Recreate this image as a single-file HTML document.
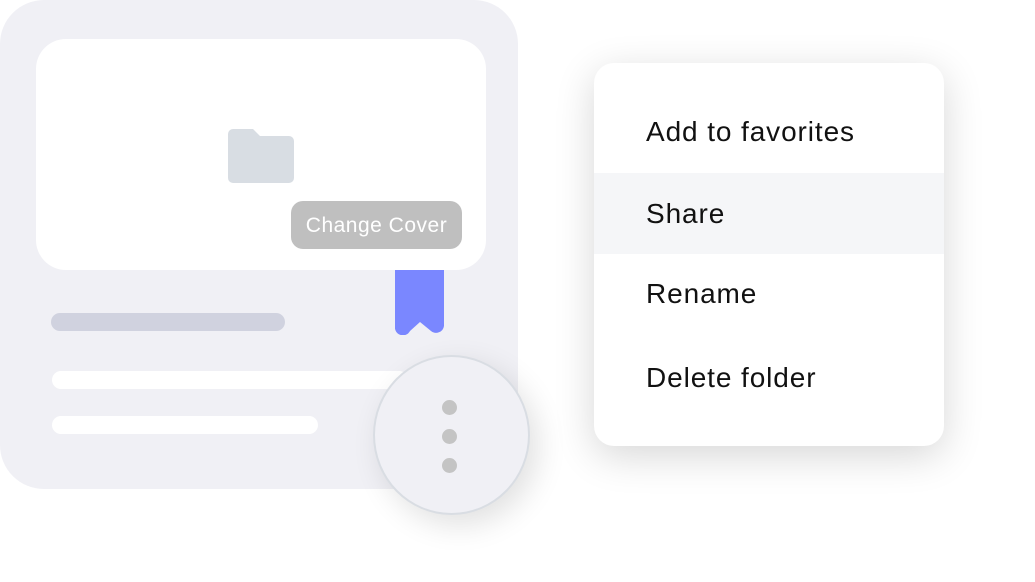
<!DOCTYPE html>
<html><head><style>
body{margin:0;width:1035px;height:582px;background:#fff;position:relative;overflow:hidden;font-family:"Liberation Sans",sans-serif}
div{position:absolute;box-sizing:border-box}
.card{left:0;top:0;width:518px;height:489px;background:#f0f0f5;border-radius:44px}
.cover{left:36px;top:39px;width:450px;height:231px;background:#fff;border-radius:30px}
.btn{left:291px;top:201px;width:171px;height:48px;background:#bfbfbf;border-radius:12px;color:#fff;font-size:21px;line-height:50px;text-align:center;letter-spacing:0.5px}
.bar{border-radius:9px;height:18px}
.circle{left:373px;top:355px;width:157px;height:160px;border-radius:50%;background:#f0f0f5;border:2.5px solid #d9dde3;box-shadow:8px 10px 30px rgba(0,0,0,0.12)}
.dot{width:15px;height:15px;border-radius:50%;background:#c4c4c4;left:442px}
.menu{left:594px;top:63px;width:350px;height:383px;background:#fff;border-radius:20px;box-shadow:0 10px 40px rgba(0,0,0,0.16);overflow:hidden}
.item{left:0;width:350px;height:81px;padding-left:52px;font-size:28px;letter-spacing:0.9px;color:#111;line-height:81px}
</style></head><body>
<div class="card"></div>
<div class="cover"></div>
<svg style="position:absolute;left:228px;top:129px" width="66" height="54" viewBox="0 0 66 54"><path d="M0 5a5 5 0 0 1 5-5h20l7 7h29a5 5 0 0 1 5 5v37a5 5 0 0 1-5 5H5a5 5 0 0 1-5-5z" fill="#d8dde3"/></svg>
<div class="btn">Change Cover</div>
<svg style="position:absolute;left:395px;top:270px" width="49" height="65" viewBox="0 0 49 65"><path d="M0 0h49v56a8 8 0 0 1-13 5l-11-9-10 9a8 8 0 0 1-15-5z" fill="#7a87ff"/></svg>
<div class="bar" style="left:51px;top:313px;width:234px;background:#d0d2df"></div>
<div class="bar" style="left:52px;top:371px;width:356px;background:#fff"></div>
<div class="bar" style="left:52px;top:416px;width:266px;background:#fff"></div>
<div class="circle"></div>
<div class="dot" style="left:442px;top:400px"></div>
<div class="dot" style="left:442px;top:429px"></div>
<div class="dot" style="left:442px;top:458px"></div>
<div class="menu">
<div class="item" style="top:28px">Add to favorites</div>
<div class="item" style="top:110px;background:#f5f6f8">Share</div>
<div class="item" style="top:190px">Rename</div>
<div class="item" style="top:274px">Delete folder</div>
</div>
</body></html>
